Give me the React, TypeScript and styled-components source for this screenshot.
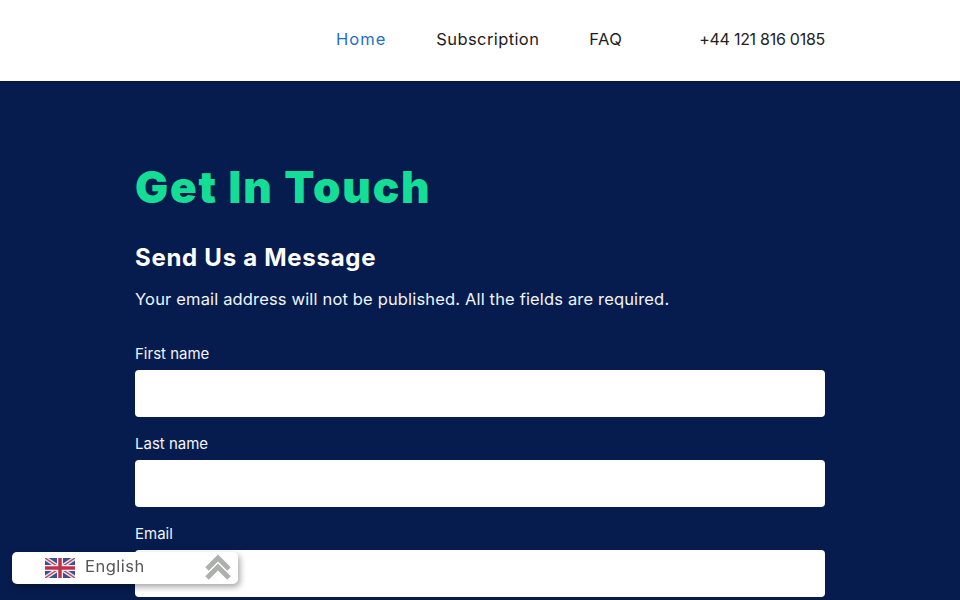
import React from 'react';
import styled, { createGlobalStyle } from 'styled-components';

const GlobalStyle = createGlobalStyle`
  html, body {
    margin: 0;
    padding: 0;
    height: 100%;
    overflow: hidden;
    background: #071c4e;
    font-family: Inter, "Liberation Sans", sans-serif;
  }
  * { box-sizing: border-box; }
`;

const Header = styled.header`
  position: relative;
  height: 81px;
  background: #fff;
  display: flex;
  align-items: center;
  justify-content: flex-end;
  padding: 0 135px 3px 0;
  box-shadow: 0 1px 4px rgba(0, 0, 0, 0.25);
`;

const NavLink = styled.a<{ $active?: boolean }>`
  font-size: 16.5px;
  font-weight: 400;
  letter-spacing: ${props => (props.$active ? '1px' : '0.4px')};
  color: ${props => (props.$active ? '#1f6fc4' : '#1c1c1c')};
  margin-right: 50px;
`;

const Phone = styled.span`
  font-size: 16px;
  font-weight: 400;
  letter-spacing: -0.27px;
  color: #222;
  margin-left: 27px;
`;

const Main = styled.main`
  background: #071c4e;
  height: 519px;
  padding: 79px 135px 0;
  overflow: hidden;
`;

const Title = styled.h1`
  margin: 0;
  font-size: 44px;
  line-height: 54px;
  font-weight: 900;
  letter-spacing: 1.85px;
  color: #14de96;
`;

const SubTitle = styled.h2`
  margin: 29px 0 0;
  font-size: 24px;
  line-height: 30px;
  font-weight: 700;
  letter-spacing: 0.72px;
  color: #fff;
`;

const Note = styled.p`
  margin: 14px 0 0;
  font-size: 16.5px;
  line-height: 24px;
  letter-spacing: 0.16px;
  color: #f0f4fc;
`;

const Form = styled.form`
  margin-top: 34px;
  display: flex;
  flex-direction: column;
  gap: 18px;
`;

const Field = styled.label`
  display: flex;
  flex-direction: column;
  gap: 7px;
`;

const LabelText = styled.span`
  font-size: 15px;
  line-height: 18px;
  color: #f0f4fc;
`;

const Input = styled.input`
  height: 47px;
  width: 100%;
  border: none;
  border-radius: 4px;
  background: #fff;
`;

const LangBar = styled.div`
  position: fixed;
  left: 12px;
  top: 552px;
  width: 226px;
  height: 32px;
  background: #fff;
  border-radius: 5px;
  box-shadow: 2px 3px 6px rgba(0, 0, 0, 0.35);
  display: flex;
  align-items: center;
  padding-left: 33px;
`;

const LangText = styled.span`
  margin: -4px 0 0 10px;
  font-size: 16.5px;
  color: #555;
  letter-spacing: 0.5px;
`;

const Chevrons = styled.svg`
  position: absolute;
  right: 6px;
  top: 2px;
`;

const Flag = () => (
  <svg width="30" height="20" viewBox="0 0 60 40">
    <rect width="60" height="40" fill="#3f4f8f" />
    <path d="M0 0L60 40M60 0L0 40" stroke="#e8e8f0" strokeWidth="8" />
    <path d="M0 0L60 40M60 0L0 40" stroke="#c0394f" strokeWidth="2.6" />
    <path d="M30 0V40M0 20H60" stroke="#f0f0f5" strokeWidth="12" />
    <path d="M30 0V40M0 20H60" stroke="#c0304a" strokeWidth="7" />
  </svg>
);

const fields = ['First name', 'Last name', 'Email'];

export default function App() {
  return (
    <>
      <GlobalStyle />
      <Header>
        <NavLink $active>Home</NavLink>
        <NavLink>Subscription</NavLink>
        <NavLink>FAQ</NavLink>
        <Phone>+44 121 816 0185</Phone>
      </Header>
      <Main>
        <Title>Get In Touch</Title>
        <SubTitle>Send Us a Message</SubTitle>
        <Note>Your email address will not be published. All the fields are required.</Note>
        <Form>
          {fields.map(name => (
            <Field key={name}>
              <LabelText>{name}</LabelText>
              <Input type="text" />
            </Field>
          ))}
        </Form>
      </Main>
      <LangBar>
        <Flag />
        <LangText>English</LangText>
        <Chevrons width="28" height="27" viewBox="0 0 28 27" fill="none" stroke="#aeb0ae" strokeWidth="5">
          <path d="M3 15L14 4L25 15" />
          <path d="M3 24L14 13L25 24" />
        </Chevrons>
      </LangBar>
    </>
  );
}
